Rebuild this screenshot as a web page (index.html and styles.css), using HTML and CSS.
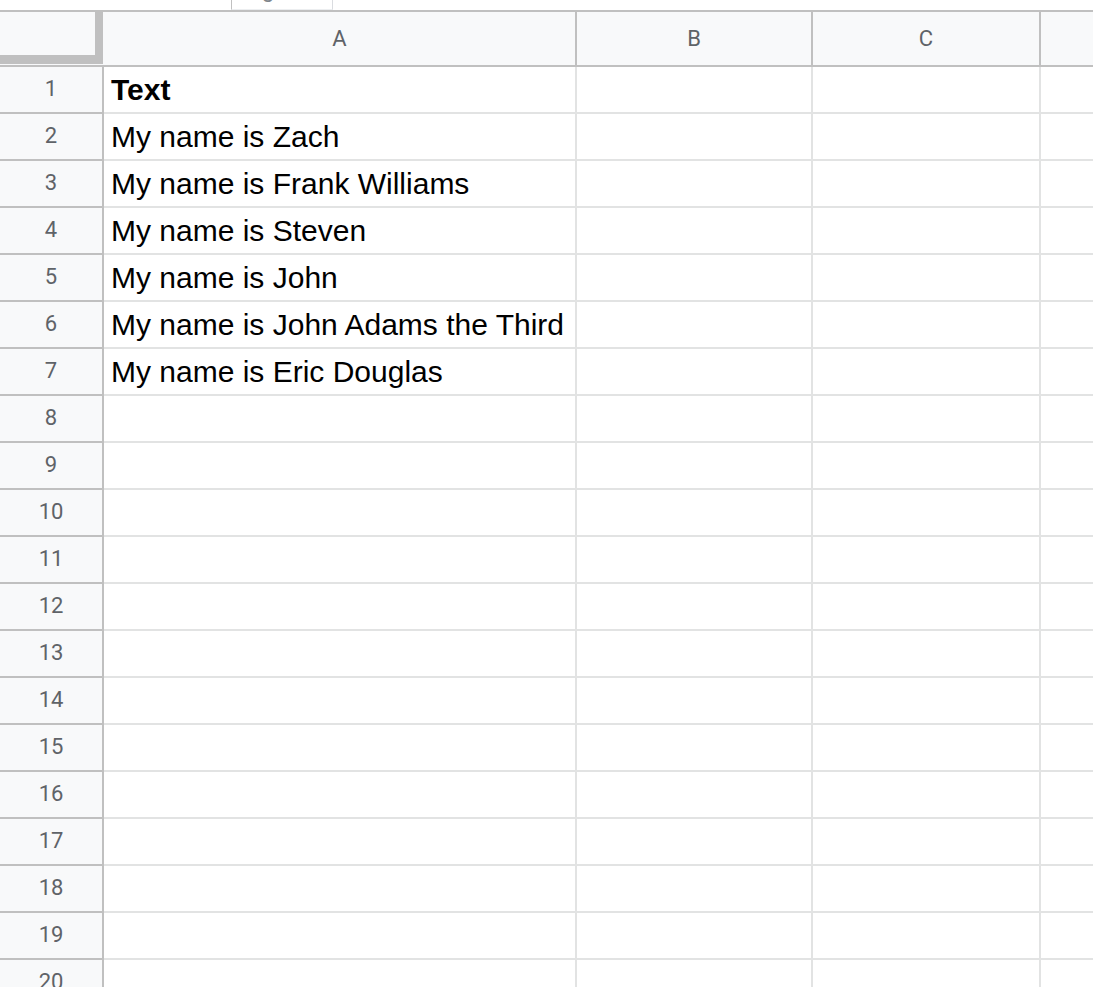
FILE: index.html
```html
<!DOCTYPE html>
<html lang="en">
<head>
<meta charset="utf-8">
<title>Sheet</title>
<link rel="stylesheet" href="styles.css">
</head>
<body>
<div class="topstrip">
  <div class="tab"><span class="tab-label">g</span></div>
</div>
<div class="grid">
  <div class="corner"><span class="freeze-v"></span><span class="freeze-h"></span></div>
  <div class="colhead">A</div>
  <div class="colhead">B</div>
  <div class="colhead">C</div>
  <div class="colhead last"></div>

  <div class="rowhead">1</div><div class="cell bold">Text</div><div class="cell"></div><div class="cell"></div><div class="cell last"></div>
  <div class="rowhead">2</div><div class="cell">My name is Zach</div><div class="cell"></div><div class="cell"></div><div class="cell last"></div>
  <div class="rowhead">3</div><div class="cell">My name is Frank Williams</div><div class="cell"></div><div class="cell"></div><div class="cell last"></div>
  <div class="rowhead">4</div><div class="cell">My name is Steven</div><div class="cell"></div><div class="cell"></div><div class="cell last"></div>
  <div class="rowhead">5</div><div class="cell">My name is John</div><div class="cell"></div><div class="cell"></div><div class="cell last"></div>
  <div class="rowhead">6</div><div class="cell">My name is John Adams the Third</div><div class="cell"></div><div class="cell"></div><div class="cell last"></div>
  <div class="rowhead">7</div><div class="cell">My name is Eric Douglas</div><div class="cell"></div><div class="cell"></div><div class="cell last"></div>
  <div class="rowhead">8</div><div class="cell"></div><div class="cell"></div><div class="cell"></div><div class="cell last"></div>
  <div class="rowhead">9</div><div class="cell"></div><div class="cell"></div><div class="cell"></div><div class="cell last"></div>
  <div class="rowhead">10</div><div class="cell"></div><div class="cell"></div><div class="cell"></div><div class="cell last"></div>
  <div class="rowhead">11</div><div class="cell"></div><div class="cell"></div><div class="cell"></div><div class="cell last"></div>
  <div class="rowhead">12</div><div class="cell"></div><div class="cell"></div><div class="cell"></div><div class="cell last"></div>
  <div class="rowhead">13</div><div class="cell"></div><div class="cell"></div><div class="cell"></div><div class="cell last"></div>
  <div class="rowhead">14</div><div class="cell"></div><div class="cell"></div><div class="cell"></div><div class="cell last"></div>
  <div class="rowhead">15</div><div class="cell"></div><div class="cell"></div><div class="cell"></div><div class="cell last"></div>
  <div class="rowhead">16</div><div class="cell"></div><div class="cell"></div><div class="cell"></div><div class="cell last"></div>
  <div class="rowhead">17</div><div class="cell"></div><div class="cell"></div><div class="cell"></div><div class="cell last"></div>
  <div class="rowhead">18</div><div class="cell"></div><div class="cell"></div><div class="cell"></div><div class="cell last"></div>
  <div class="rowhead">19</div><div class="cell"></div><div class="cell"></div><div class="cell"></div><div class="cell last"></div>
  <div class="rowhead">20</div><div class="cell"></div><div class="cell"></div><div class="cell"></div><div class="cell last"></div>
</div>
</body>
</html>
```
FILE: styles.css
```css
html, body {
  margin: 0;
  padding: 0;
  background: #ffffff;
  overflow: hidden;
}

body {
  width: 1093px;
  height: 987px;
}

/* strip above the grid, with the edge of a tab box */
.topstrip {
  height: 10px;
  border-bottom: 2px solid #c0c0c0;
  overflow: hidden;
}

.tab {
  margin-left: 231px;
  width: 100px;
  height: 9px;
  border-left: 1px solid #c0c0c0;
  border-right: 1px solid #dadce0;
  border-bottom: 1px solid #eceef0;
  overflow: hidden;
}

.tab-label {
  display: block;
  margin-top: -21px;
  padding-left: 30px;
  font: 22px/22px Roboto, "Liberation Sans", sans-serif;
  color: #80868b;
}

/* spreadsheet grid */
.grid {
  display: grid;
  grid-template-columns: 104px 473px 236px 228px 1fr;
  grid-template-rows: 55px;
  grid-auto-rows: 47px;
}

.grid > div {
  box-sizing: border-box;
}

.corner {
  position: relative;
  background: #f8f9fa;
  border-bottom: 2px solid #c0c0c0;
}

.freeze-v {
  position: absolute;
  left: 95px;
  top: 0;
  width: 8px;
  height: 52px;
  background: #c0c0c0;
}

.freeze-h {
  position: absolute;
  left: 0;
  top: 43px;
  width: 95px;
  height: 9px;
  background: #c0c0c0;
}

.colhead {
  display: flex;
  align-items: center;
  justify-content: center;
  background: #f8f9fa;
  border-right: 2px solid #c0c0c0;
  border-bottom: 2px solid #c0c0c0;
  font: 22px Roboto, "Liberation Sans", sans-serif;
  color: #5f6368;
}

.colhead.last {
  border-right: none;
}

.rowhead {
  display: flex;
  align-items: center;
  justify-content: center;
  padding-bottom: 2px;
  background: #f8f9fa;
  border-right: 2px solid #c0c0c0;
  border-bottom: 2px solid #c0c0c0;
  font: 22px Roboto, "Liberation Sans", sans-serif;
  color: #5f6368;
}

.cell {
  padding-left: 7px;
  border-right: 2px solid #e2e3e3;
  border-bottom: 2px solid #e2e3e3;
  font: 30px/45px "Liberation Sans", Arial, sans-serif;
  color: #000000;
  white-space: nowrap;
  overflow: hidden;
}

.cell.last {
  border-right: none;
}

.cell.bold {
  font-weight: bold;
}
```
